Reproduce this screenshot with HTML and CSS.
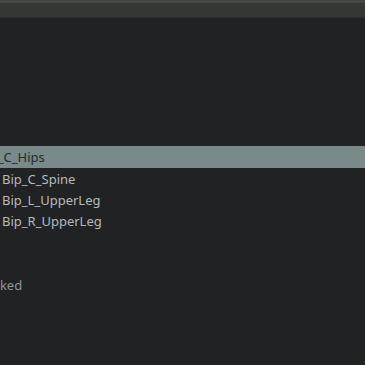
FILE: index.html
```html
<!DOCTYPE html>
<html lang="en">
<head>
  <meta charset="UTF-8" />
  <title>Hierarchy</title>
  <link rel="stylesheet" href="styles.css">
</head>
<body>
  <div class="topbar"></div>
  <div class="toolbar"></div>
  <div class="panel">
    <ul class="tree">
      <li class="node parent selected">Bip_C_Hips</li>
      <li class="node child">Bip_C_Spine</li>
      <li class="node child">Bip_L_UpperLeg</li>
      <li class="node child">Bip_R_UpperLeg</li>
    </ul>
    <div class="status">Locked</div>
  </div>
</body>
</html>
```

FILE: styles.css
```css
* { box-sizing: border-box; margin: 0; padding: 0; }
html, body { height: 100%; overflow: hidden; }
body { font-family: "Noto Sans", sans-serif; background: #212224; color: #b4bbbc; }
.topbar { height: 3px; background: #464847; }
.toolbar { height: 15px; background: #353735; border-bottom: 1px solid #2c2e2d; }
.panel { padding-top: 128px; }
.tree { list-style: none; }
.node { height: 21px; line-height: 21px; font-size: 13px; white-space: nowrap; }
.node.parent { text-indent: -22px; }
.node.child { padding-left: 2px; }
.node.selected { background: #788a8a; color: #262a2b; height: 22px; line-height: 22px; }
.node.selected + .node { margin-top: 1px; }
.status { margin-top: 44px; font-size: 13px; color: #8e9597; text-indent: -21px; white-space: nowrap; }
```
